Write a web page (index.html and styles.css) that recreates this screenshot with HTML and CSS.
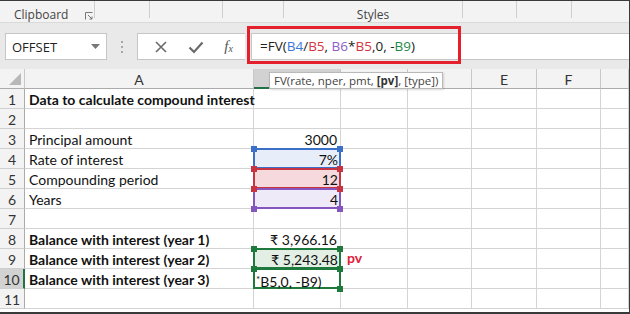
FILE: index.html
```html
<!DOCTYPE html>
<html>
<head>
	<link rel="stylesheet" href="styles.css">
</head>
<body>
	<div class="app">
		<div class="ribbon">
			<div class="group g1"><span class="glabel">Clipboard</span>
				<svg class="launcher" width="8" height="8" viewBox="0 0 8 8"><path d="M0.5 7.5V0.5H7.5" fill="none" stroke="#777"/><path d="M3 3L7 7M7 4.5V7H4.5" fill="none" stroke="#777"/></svg>
			</div>
			<div class="group g2"></div>
			<div class="group g3"></div>
			<div class="group g4"></div>
			<div class="group g5"><span class="glabel">Styles</span></div>
			<div class="group g6"></div>
			<div class="group g7"></div>
			<div class="group g8"></div>
		</div>

		<div class="fbar">
			<div class="namebox">
				<span>OFFSET</span>
				<svg width="9" height="5" viewBox="0 0 9 5"><path d="M0 0H9L4.5 5Z" fill="#777"/></svg>
			</div>
			<div class="grip"><i></i><i></i><i></i></div>
			<div class="fbtns">
				<svg width="14" height="14" viewBox="0 0 14 14"><path d="M2 2L12 12M12 2L2 12" stroke="#6a6a6a" stroke-width="1.6"/></svg>
				<svg width="16" height="14" viewBox="0 0 16 14"><path d="M1.5 7.5L6 12L14.5 2.5" fill="none" stroke="#6a6a6a" stroke-width="2.2"/></svg>
				<span class="fx">f<sub>x</sub></span>
			</div>
			<div class="finput">=FV(<span class="c-blue">B4</span>/<span class="c-red">B5</span>, <span class="c-purple">B6</span>*<span class="c-red">B5</span>,0, -<span class="c-green">B9</span>)</div>
			<div class="redbox"></div>
		</div>

		<div class="sheet">
			<div class="grid">
				<div class="hd corner"></div><div class="hd">A</div><div class="hd hd-sel"></div><div class="hd"></div><div class="hd"></div><div class="hd">E</div><div class="hd">F</div><div class="hd"></div>

				<div class="rh">1</div><div class="c bold">Data to calculate compound interest</div><div class="c"></div><div class="c"></div><div class="c"></div><div class="c"></div><div class="c"></div><div class="c"></div>
				<div class="rh">2</div><div class="c"></div><div class="c"></div><div class="c"></div><div class="c"></div><div class="c"></div><div class="c"></div><div class="c"></div>
				<div class="rh">3</div><div class="c">Principal amount</div><div class="c num">3000</div><div class="c"></div><div class="c"></div><div class="c"></div><div class="c"></div><div class="c"></div>
				<div class="rh">4</div><div class="c">Rate of interest</div><div class="c num rng rng-blue"><i class="h tl"></i><i class="h tr"></i>7%</div><div class="c"></div><div class="c"></div><div class="c"></div><div class="c"></div><div class="c"></div>
				<div class="rh">5</div><div class="c">Compounding period</div><div class="c num rng rng-red"><i class="h tl"></i><i class="h tr"></i><i class="h bl"></i><i class="h br"></i>12</div><div class="c"></div><div class="c"></div><div class="c"></div><div class="c"></div><div class="c"></div>
				<div class="rh">6</div><div class="c">Years</div><div class="c num rng rng-purple"><i class="h bl"></i><i class="h br"></i>4</div><div class="c"></div><div class="c"></div><div class="c"></div><div class="c"></div><div class="c"></div>
				<div class="rh">7</div><div class="c"></div><div class="c"></div><div class="c"></div><div class="c"></div><div class="c"></div><div class="c"></div><div class="c"></div>
				<div class="rh">8</div><div class="c bold">Balance with interest (year 1)</div><div class="c num">₹ 3,966.16</div><div class="c"></div><div class="c"></div><div class="c"></div><div class="c"></div><div class="c"></div>
				<div class="rh">9</div><div class="c bold">Balance with interest (year 2)</div><div class="c num rng rng-green"><i class="h tl"></i><i class="h tr"></i><i class="h bl"></i><i class="h br"></i>₹ 5,243.48</div><div class="c"><span class="pv">pv</span></div><div class="c"></div><div class="c"></div><div class="c"></div><div class="c"></div>
				<div class="rh rh-sel">10</div><div class="c bold">Balance with interest (year 3)</div><div class="c rng active"><i class="h br"></i><span class="edit"><small>*</small>B5,0, -B9)</span></div><div class="c"></div><div class="c"></div><div class="c"></div><div class="c"></div><div class="c"></div>
				<div class="rh">11</div><div class="c"></div><div class="c"></div><div class="c"></div><div class="c"></div><div class="c"></div><div class="c"></div><div class="c"></div>
			</div>
			<div class="tip">FV(rate, nper, pmt, <b>[pv]</b>, [type])</div>
		</div>
	</div>
</body>
</html>
```

FILE: styles.css
```css
* {
	margin: 0;
	padding: 0;
	box-sizing: border-box;
}

html, body {
	width: 630px;
	height: 314px;
	overflow: hidden;
	background: #fff;
}

.app {
	width: 630px;
	height: 314px;
	border-top: 1px solid #3a3a3a;
	border-right: 1px solid #3a3a3a;
	border-bottom: 2px solid #3a3a3a;
	display: flex;
	flex-direction: column;
	font-family: Lato, "Open Sans", sans-serif;
	background: #e9e9e9;
}

/* ribbon group labels */
.ribbon {
	height: 22px;
	display: flex;
	background: #f3f3f3;
	border-bottom: 1px solid #dadada;
	flex: none;
}
.group {
	height: 17px;
	border-right: 1px solid #cfcfcf;
	display: flex;
	align-items: flex-end;
	justify-content: center;
	position: relative;
	font-family: "Open Sans", sans-serif;
	font-size: 12px;
	color: #444;
}
.glabel { line-height: 12px; margin-bottom: -3px; }
.g1 { width: 95px; justify-content: flex-start; padding-left: 14px; }
.g2 { width: 55px; }
.g3 { width: 73px; }
.g4 { width: 61px; }
.g5 { width: 179px; }
.g6 { width: 54px; }
.g7 { width: 55px; }
.g8 { width: 57px; border-right: none; }
.launcher { position: absolute; left: 85px; top: 11px; }

/* formula bar */
.fbar {
	height: 46px;
	flex: none;
	display: flex;
	align-items: flex-start;
	padding-top: 10px;
	padding-left: 5px;
	position: relative;
}
.namebox {
	width: 102px;
	height: 27px;
	background: #fff;
	border: 1px solid #c6c6c6;
	display: flex;
	align-items: center;
	justify-content: space-between;
	padding: 0 6px 0 6px;
	font-family: "Open Sans", sans-serif;
	font-size: 13px;
	color: #222;
}
.grip {
	width: 30px;
	height: 27px;
	display: flex;
	flex-direction: column;
	align-items: center;
	justify-content: center;
	gap: 3px;
}
.grip i {
	width: 2px;
	height: 2px;
	background: #a8a8a8;
}
.fbtns {
	width: 108px;
	height: 27px;
	background: #fff;
	border: 1px solid #c6c6c6;
	border-right: none;
	display: flex;
	align-items: center;
	justify-content: space-around;
	padding: 0 2px 0 6px;
}
.fx {
	font-family: "Liberation Serif", serif;
	font-style: italic;
	font-size: 15px;
	color: #555;
}
.fx sub { font-size: 10px; vertical-align: -1px; }
.finput {
	flex: 1;
	height: 27px;
	margin-left: 6px;
	background: #fff;
	border: 1px solid #c6c6c6;
	border-right: none;
	padding-left: 8px;
	font-family: "Open Sans", sans-serif;
	font-size: 13.5px;
	line-height: 25px;
	color: #222;
}
.c-blue { color: #3c78d8; }
.c-red { color: #d4343f; }
.c-purple { color: #8e5cc6; }
.c-green { color: #1e8a47; }
.redbox {
	position: absolute;
	left: 247px;
	top: 3px;
	width: 214px;
	height: 38px;
	border: 3px solid #e3202c;
}

/* sheet */
.sheet {
	flex: 1;
	position: relative;
	background: #fff;
	overflow: hidden;
}
.grid {
	display: grid;
	grid-template-columns: 25px 229px 87px 67px 64px 65px 64px 1fr;
	grid-auto-rows: 20px;
	font-size: 14px;
	color: #111;
}
.hd, .rh {
	background: #f3f3f3;
	color: #333;
	border-right: 1px solid #d0d0d0;
	border-bottom: 1px solid #cfcfcf;
	display: flex;
	align-items: center;
	justify-content: center;
	font-size: 14px;
	padding-top: 1px;
}
.hd { border-right-color: #c8c8c8; border-bottom: 1px solid #ababab; }
.rh { border-right: 1px solid #ababab; }
.hd-sel {
	background: #d2d2d2;
	border-bottom: 2px solid #217346;
}
.rh-sel {
	background: #d2d2d2;
	border-right: 2px solid #217346;
}
.corner { position: relative; }
.corner::after {
	content: "";
	position: absolute;
	right: 3px;
	bottom: 3px;
	border-left: 12px solid transparent;
	border-bottom: 12px solid #b8b8b8;
}
.c {
	border-right: 1px solid #d4d4d4;
	border-bottom: 1px solid #d4d4d4;
	padding: 1px 3px 0 4px;
	line-height: 19px;
	white-space: nowrap;
	position: relative;
}
.bold { font-weight: bold; }
.num { text-align: right; }

/* reference ranges */
.rng { margin: -1px 0 0 -1px; border-right: none; border-bottom: none; padding-top: 2px; }
.rng-blue { background: #e8eef9; box-shadow: inset 0 0 0 2px #3c6fc8; }
.rng-red { background: #f6d9dc; box-shadow: inset 0 0 0 2px #c8343f; }
.rng-purple { background: #efeaf7; box-shadow: inset 0 0 0 2px #8555c0; }
.rng-green { background: #e3efe5; box-shadow: inset 0 0 0 2px #1e7a3c; }
.active { box-shadow: inset 0 0 0 2px #1e7a3c; padding-left: 3px; }
.rng { height: 21px; width: 88px; }
.h {
	position: absolute;
	width: 6px;
	height: 6px;
	z-index: 2;
}
.rng-blue .h { background: #3c6fc8; }
.rng-red .h { background: #c8343f; }
.rng-purple .h { background: #8555c0; }
.rng-green .h, .active .h { background: #1e7a3c; }
.tl { left: -2px; top: -2px; }
.tr { right: -2px; top: -2px; }
.bl { left: -2px; bottom: -3px; }
.br { right: -2px; bottom: -3px; }
.edit small { font-size: 10px; vertical-align: 4px; }

.pv {
	position: absolute;
	left: 6px;
	top: -1px;
	color: #e0203a;
	font-weight: bold;
	font-size: 14px;
}

/* function tooltip */
.tip {
	position: absolute;
	left: 269px;
	top: 3px;
	height: 17px;
	padding: 0 4px;
	background: #fff;
	border: 1px solid #b9b9b9;
	font-family: "Open Sans", sans-serif;
	font-size: 11.5px;
	line-height: 15px;
	color: #444;
	box-shadow: 1px 1px 2px rgba(0,0,0,0.15);
}
.tip b { color: #333; }
```
